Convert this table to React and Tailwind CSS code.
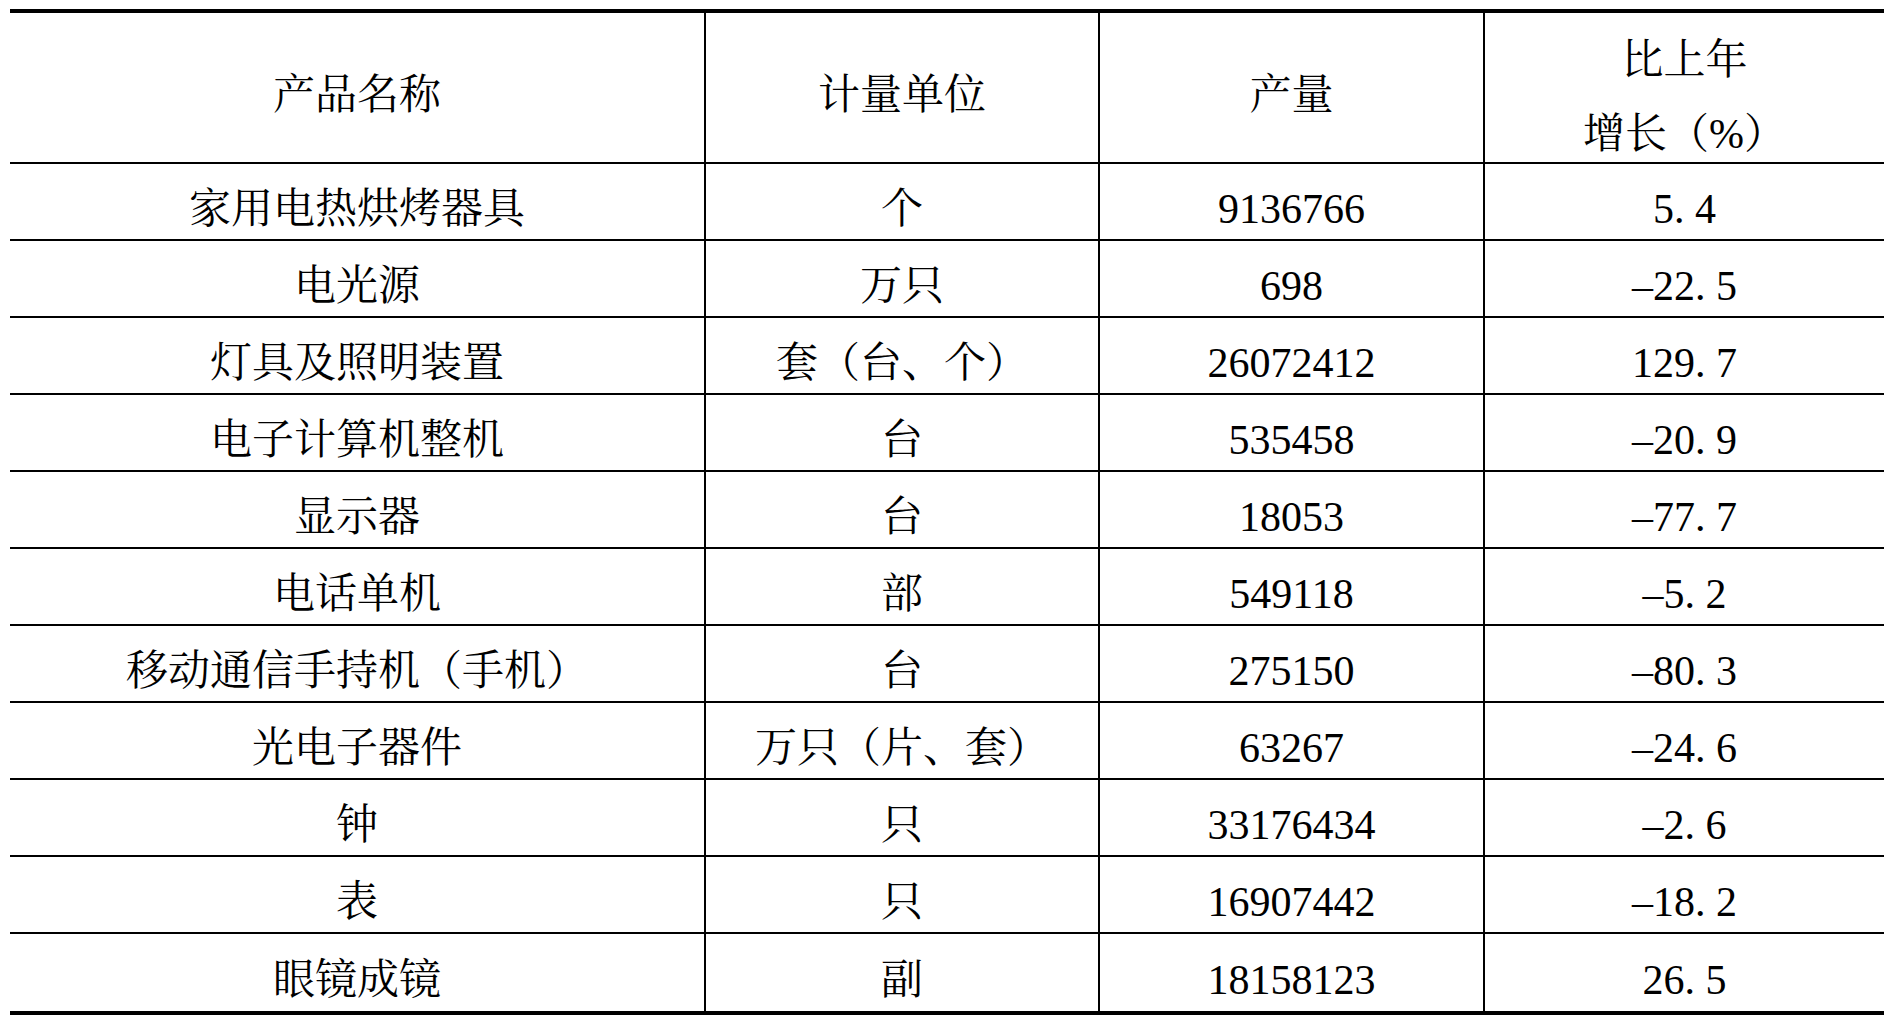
const rows = [
  ['家用电热烘烤器具', '个', '9136766', '5.4'],
  ['电光源', '万只', '698', '-22.5'],
  ['灯具及照明装置', '套（台、个）', '26072412', '129.7'],
  ['电子计算机整机', '台', '535458', '-20.9'],
  ['显示器', '台', '18053', '-77.7'],
  ['电话单机', '部', '549118', '-5.2'],
  ['移动通信手持机（手机）', '台', '275150', '-80.3'],
  ['光电子器件', '万只（片、套）', '63267', '-24.6'],
  ['钟', '只', '33176434', '-2.6'],
  ['表', '只', '16907442', '-18.2'],
  ['眼镜成镜', '副', '18158123', '26.5'],
];

// 宋体처럼 마침표/마이너스를 반각 폭으로
function Num({ value }) {
  return (
    <span>
      {value.split('').map((ch, i) => {
        if (ch === '.') {
          return (
            <span key={i} className="inline-block w-[0.5em] text-left">
              .
            </span>
          );
        }
        if (ch === '-') {
          return (
            <span key={i} className="inline-block w-[0.5em] text-center">
              –
            </span>
          );
        }
        return <span key={i}>{ch}</span>;
      })}
    </span>
  );
}

const cell = 'flex items-center justify-center pt-[14px]';

export default function App() {
  return (
    <div
      className="min-h-screen bg-white text-black"
      style={{ fontFamily: '"Liberation Serif", "Noto Serif CJK SC", "Noto Sans CJK SC", serif' }}
    >
      <div className="mx-[10px] mt-[9px] w-[1874px] border-y-4 border-black text-[42px] leading-none">
        {/* 표 머리 */}
        <div className="grid h-[151px] grid-cols-[694px_394px_385px_401px] border-b-2 border-black">
          <div className={cell}>产品名称</div>
          <div className={`${cell} border-l-2 border-black`}>计量单位</div>
          <div className={`${cell} border-l-2 border-black`}>产量</div>
          <div className="flex flex-col items-center justify-center gap-[32px] border-l-2 border-black pt-[18px]">
            <span>比上年</span>
            <span>增长（%）</span>
          </div>
        </div>

        {/* 본문 */}
        {rows.map((r, idx) => (
          <div
            key={r[0]}
            className={`grid h-[77px] grid-cols-[694px_394px_385px_401px] ${
              idx < rows.length - 1 ? 'border-b-2 border-black' : ''
            }`}
          >
            <div className={cell}>{r[0]}</div>
            <div className={`${cell} border-l-2 border-black`}>{r[1]}</div>
            <div className={`${cell} border-l-2 border-black`}>
              <Num value={r[2]} />
            </div>
            <div className={`${cell} border-l-2 border-black`}>
              <Num value={r[3]} />
            </div>
          </div>
        ))}
      </div>
    </div>
  );
}
